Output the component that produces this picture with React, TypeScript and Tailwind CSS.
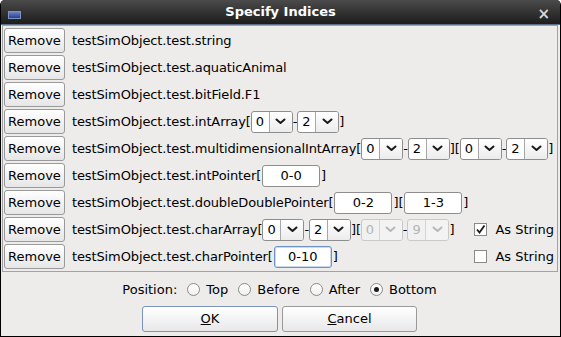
import React from 'react';

const Chevron: React.FC<{ disabled?: boolean }> = ({ disabled }) => (
  <svg width="11" height="7" viewBox="0 0 11 7" className="block">
    <path
      d="M1.5 1.5 L5.5 5 L9.5 1.5"
      fill="none"
      stroke={disabled ? '#b8b8b8' : '#1a1a1a'}
      strokeWidth="2"
      strokeLinecap="round"
      strokeLinejoin="round"
    />
  </svg>
);

const Combo: React.FC<{ value: string; disabled?: boolean }> = ({ value, disabled }) => (
  <div
    className={`flex h-[22px] w-[42px] shrink-0 items-stretch rounded-[3px] border tracking-normal ${
      disabled ? 'border-[#c9c9c9] bg-[#f1f1f1] text-[#b5b5b5]' : 'border-[#8e8e8e] bg-white text-black'
    }`}
  >
    <div className="flex w-[17px] items-center pl-[4px]">{value}</div>
    <div
      className={`flex flex-1 items-center justify-center border-l ${
        disabled ? 'border-[#d4d4d4] bg-[#f3f3f3]' : 'border-[#a8a8a8] bg-linear-to-b from-white to-[#ececec]'
      } rounded-r-[2px]`}
    >
      <Chevron disabled={disabled} />
    </div>
  </div>
);

const Field: React.FC<{ value: string; focused?: boolean }> = ({ value, focused }) => (
  <div
    className={`mx-px flex h-[22px] w-[58px] shrink-0 items-center justify-center rounded-[3px] border bg-white tracking-normal ${
      focused ? 'border-[#6f94c4] shadow-[inset_0_0_0_1px_#c9daf0]' : 'border-[#8e8e8e]'
    }`}
  >
    {value}
  </div>
);

const Dash = () => <span>-</span>;

const AsString: React.FC<{ checked?: boolean }> = ({ checked }) => (
  <div className="ml-auto mr-[2px] flex items-center gap-[8px] tracking-normal">
    <div className="flex h-[13px] w-[13px] items-center justify-center border border-[#8a8a8a] bg-white">
      {checked && (
        <svg width="11" height="11" viewBox="0 0 11 11">
          <path d="M2 5.5 L4.5 8.5 L9.5 1.5" fill="none" stroke="#1a1a1a" strokeWidth="1.8" />
        </svg>
      )}
    </div>
    <span>As String</span>
  </div>
);

const Row: React.FC<{ children: React.ReactNode }> = ({ children }) => (
  <div className="flex h-[25px] items-center">
    <button className="h-[25px] w-[61px] shrink-0 rounded-[3px] border border-[#9a9a9a] bg-linear-to-b from-white to-[#e6e6e6] text-black">
      Remove
    </button>
    <div className="ml-[7px] flex min-w-0 flex-1 items-center whitespace-nowrap tracking-[-0.12px]">{children}</div>
  </div>
);

const Radio: React.FC<{ label: string; checked?: boolean }> = ({ label, checked }) => (
  <div className="flex items-center gap-[6px]">
    <div className="flex h-[13px] w-[13px] items-center justify-center rounded-full border border-[#8a8a8a] bg-linear-to-b from-white to-[#f0f0f0]">
      {checked && <div className="h-[5px] w-[5px] rounded-full bg-[#1a1a1a]" />}
    </div>
    <span>{label}</span>
  </div>
);

export default function App() {
  return (
    <div className="flex h-[337px] w-[561px] flex-col overflow-hidden rounded-t-[5px] bg-black px-px pb-px font-['DejaVu_Sans',sans-serif] text-[13px] text-black">
      <div className="relative flex h-[25px] shrink-0 items-center justify-center border-b border-[#5d6f86] bg-linear-to-b from-[#4b4b4b] to-[#1d1d1d]">
        <div className="absolute left-[7px] top-[11px] h-[8px] w-[13px] border border-[#7f93c0] bg-linear-to-b from-[#6a82c8] to-[#2c3f8a]" />
        <span className="font-bold text-white">Specify Indices</span>
        <span className="absolute right-[10px] top-[3px] text-[15px] font-bold text-[#d8d8d8]">×</span>
      </div>
      <div className="flex flex-1 flex-col bg-[#edeceb]">
        <div className="ml-px mr-[2px] flex flex-col gap-[2px] border border-[#a2a2a2] px-px pt-[2px] pb-[2px]">
          <Row>testSimObject.test.string</Row>
          <Row>testSimObject.test.aquaticAnimal</Row>
          <Row>testSimObject.test.bitField.F1</Row>
          <Row>
            testSimObject.test.intArray[
            <Combo value="0" />
            <Dash />
            <Combo value="2" />]
          </Row>
          <Row>
            testSimObject.test.multidimensionalIntArray[
            <Combo value="0" />
            <Dash />
            <Combo value="2" />
            ][
            <Combo value="0" />
            <Dash />
            <Combo value="2" />]
          </Row>
          <Row>
            testSimObject.test.intPointer[
            <Field value="0-0" />]
          </Row>
          <Row>
            testSimObject.test.doubleDoublePointer[
            <Field value="0-2" />
            ][
            <Field value="1-3" />]
          </Row>
          <Row>
            testSimObject.test.charArray[
            <Combo value="0" />
            <Dash />
            <Combo value="2" />
            ][
            <Combo value="0" disabled />
            <Dash />
            <Combo value="9" disabled />]
            <AsString checked />
          </Row>
          <Row>
            testSimObject.test.charPointer[
            <Field value="0-10" focused />]
            <AsString />
          </Row>
        </div>
        <div className="mt-[8px] flex items-center justify-center gap-[10px] pr-[2px]">
          <span>Position:</span>
          <Radio label="Top" />
          <Radio label="Before" />
          <Radio label="After" />
          <Radio label="Bottom" checked />
        </div>
        <div className="mt-[6px] flex justify-center gap-[4px] pr-[2px]">
          <button className="h-[26px] w-[136px] rounded-[3px] border border-[#7a93b8] bg-linear-to-b from-white to-[#e8e8e8]">
            <u>O</u>K
          </button>
          <button className="h-[26px] w-[135px] rounded-[3px] border border-[#9a9a9a] bg-linear-to-b from-white to-[#e8e8e8]">
            <u>C</u>ancel
          </button>
        </div>
      </div>
    </div>
  );
}
